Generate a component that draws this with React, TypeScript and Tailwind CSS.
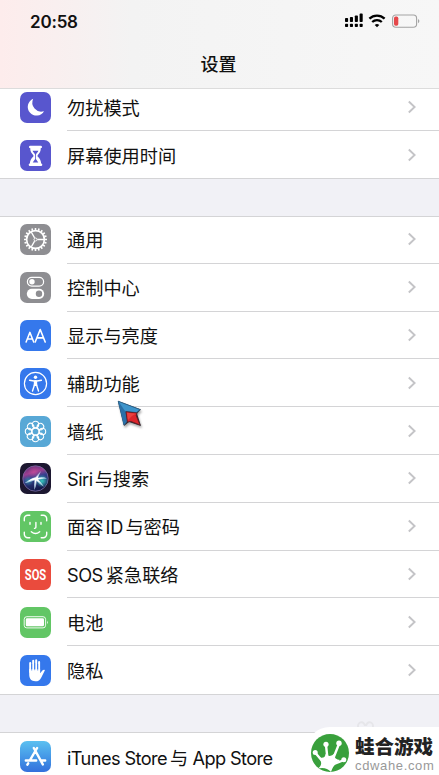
import type { ReactNode } from 'react'

interface SettingsRow {
  label: ReactNode
  icon: ReactNode
}

const TEETH = Array.from({ length: 20 }, (_, i) => i * 18)
const PETALS = Array.from({ length: 8 }, (_, i) => i * 45)

interface TileProps {
  className: string
  children: ReactNode
}

const Tile = ({ className, children }: TileProps) => (
  <div className={`w-[31px] h-[31px] rounded-[7px] overflow-hidden shrink-0 ${className}`}>
    <svg viewBox="0 0 31 31" className="block w-full h-full" fill="none">
      {children}
    </svg>
  </div>
)

const MoonIcon = () => (
  <Tile className="bg-[#5856ce]">
    <path d="M13.2 6.8 A8.7 8.7 0 1 0 24 19.2 A9 9 0 0 1 13.2 6.8 Z" fill="white" />
  </Tile>
)

const HourglassIcon = () => (
  <Tile className="bg-[#5856ce]">
    <path
      d="M10.2 5.7 H20.8 A1.2 1.2 0 0 1 20.8 8.1 C20.8 11.4 19.8 13 17.6 15.2 V16.4 C20 18.5 21 20.6 21.1 23.5 A1.2 1.2 0 0 1 21 26 H10 A1.2 1.2 0 0 1 9.9 23.5 C10 20.6 11 18.5 13.4 16.4 V15.2 C11.2 13 10.2 11.4 10.2 8.1 A1.2 1.2 0 0 1 10.2 5.7 Z"
      fill="white"
    />
    <path d="M12.6 10.7 H18.4 C17.8 12.4 16.3 13.2 15.9 14.7 V19 L18.3 22.5 H12.7 L15.1 19 V14.7 C14.7 13.2 13.2 12.4 12.6 10.7 Z" fill="#5856ce" />
  </Tile>
)

const GearIcon = () => (
  <Tile className="bg-[#8e8e92]">
    <g stroke="white">
      <circle cx="15.5" cy="15.5" r="8.9" strokeWidth="1.7" />
      {TEETH.map((a) => (
        <path key={a} d="M15.5 6.2 V4" strokeWidth="1.6" transform={`rotate(${a} 15.5 15.5)`} />
      ))}
      <circle cx="15.5" cy="15.5" r="1.5" strokeWidth="1" />
      <path d="M17.3 15.5 H24 M14.6 13.9 L11.3 8.1 M14.6 17.1 L11.3 22.9" strokeWidth="1.3" />
    </g>
  </Tile>
)

const ControlIcon = () => (
  <Tile className="bg-[#8e8e92]">
    <rect x="7.4" y="5.3" width="16.2" height="8.8" rx="4.4" stroke="white" strokeWidth="1.2" />
    <circle cx="12" cy="9.7" r="2.7" fill="white" />
    <rect x="6.8" y="16.7" width="17.4" height="10.2" rx="5.1" fill="white" />
    <circle cx="19" cy="21.8" r="3.2" fill="#8e8e92" />
  </Tile>
)

const DisplayIcon = () => (
  <Tile className="bg-[#3578ec]">
    <g stroke="white" strokeLinecap="round" strokeLinejoin="round">
      <path d="M6.1 22 L9.9 12.4 L13.7 22 M7.4 18.9 H12.4" strokeWidth="1.5" />
      <path d="M15.2 22 L20.2 9.5 L25.2 22 M17 17.9 H23.4" strokeWidth="1.6" />
    </g>
  </Tile>
)

const AccessibilityIcon = () => (
  <Tile className="bg-[#3578ec]">
    <circle cx="15.5" cy="15.5" r="11.1" stroke="white" strokeWidth="1.2" />
    <circle cx="15.5" cy="9.3" r="1.7" fill="white" />
    <path
      d="M9.6 12.3 L14 13 H17 L21.4 12.3 M15.5 12.8 V17 M14.6 16.5 L12.5 23 M16.4 16.5 L18.5 23"
      stroke="white"
      strokeWidth="1.4"
      strokeLinecap="round"
    />
    <path d="M13.9 12.6 H17.1 L17.3 18 H13.7 Z" fill="white" />
  </Tile>
)

const WallpaperIcon = () => (
  <Tile className="bg-[#58a8d6]">
    <g stroke="white" strokeWidth="1.1">
      <circle cx="15.5" cy="15.5" r="3.4" />
      {PETALS.map((a) => (
        <circle key={a} cx="15.5" cy="8.5" r="3.2" transform={`rotate(${a} 15.5 15.5)`} />
      ))}
    </g>
  </Tile>
)

const SiriIcon = () => (
  <Tile className="bg-[#1c1730]">
    <defs>
      <linearGradient id="siri-bg" x1="0" y1="0" x2="0.3" y2="1">
        <stop offset="0" stopColor="#4d2a6e" />
        <stop offset="0.35" stopColor="#9c3f92" />
        <stop offset="0.55" stopColor="#34408e" />
        <stop offset="1" stopColor="#141b4c" />
      </linearGradient>
      <radialGradient id="siri-pink" cx="0.5" cy="0.5" r="0.5">
        <stop offset="0" stopColor="#e0559c" />
        <stop offset="1" stopColor="#e0559c" stopOpacity="0" />
      </radialGradient>
      <radialGradient id="siri-teal" cx="0.5" cy="0.5" r="0.5">
        <stop offset="0" stopColor="#35c8c0" />
        <stop offset="1" stopColor="#35c8c0" stopOpacity="0" />
      </radialGradient>
    </defs>
    <circle cx="15.5" cy="15.5" r="12.7" fill="url(#siri-bg)" stroke="#7c6ca4" strokeWidth="0.8" />
    <circle cx="14" cy="9" r="6.5" fill="url(#siri-pink)" opacity="0.5" />
    <circle cx="22" cy="18" r="6.5" fill="url(#siri-teal)" />
    <circle cx="8.5" cy="18" r="5" fill="url(#siri-teal)" opacity="0.5" />
    <path d="M4.5 20.2 Q12 14.2 15 14.4 L21 8 Q18.5 13.5 18 14.5 Q22.5 13.2 27 15.5 Q21 16 18.6 16.7 Q22 20 24 23.8 Q19 20.5 16.8 18.2 Q16.5 22.5 14.4 27 Q13.6 22 14.4 17.6 Q10 19.2 4.5 20.2 Z" fill="#d4f4ff" opacity="0.7" />
    <path d="M8 18.2 Q13 14.7 16 14.6 L18.6 12.2 L17.8 15 L23.5 15.3 L17.8 16.3 L20.8 20 L16.2 17.4 L15 22.5 L14.8 16.8 Z" fill="white" />
  </Tile>
)

const FaceIcon = () => (
  <Tile className="bg-[#62c665]">
    <g stroke="white" strokeWidth="1.4" strokeLinecap="round">
      <path d="M4.3 9.8 V7.8 A3.5 3.5 0 0 1 7.8 4.3 H9.8 M21.2 4.3 H23.2 A3.5 3.5 0 0 1 26.7 7.8 V9.8 M26.7 21.2 V23.2 A3.5 3.5 0 0 1 23.2 26.7 H21.2 M9.8 26.7 H7.8 A3.5 3.5 0 0 1 4.3 23.2 V21.2" />
      <path d="M10 11.5 V13.3 M21 11.5 V13.3 M15.9 11.5 V16.3 Q15.9 17.4 14.5 17.4 M11.3 20.7 Q15.5 24.2 19.7 20.7" />
    </g>
  </Tile>
)

const SosIcon = () => (
  <Tile className="bg-[#ea4b3d]">
    <text
      x="15.5"
      y="20.5"
      textAnchor="middle"
      textLength="21.5"
      lengthAdjust="spacingAndGlyphs"
      fill="white"
      className="font-['Roboto','Liberation_Sans',sans-serif] text-[14px] font-bold"
    >
      SOS
    </text>
  </Tile>
)

const BatteryIcon = () => (
  <Tile className="bg-[#62c665]">
    <rect x="4.2" y="9.7" width="21.4" height="11.2" rx="2.6" stroke="white" strokeWidth="0.9" />
    <rect x="5.8" y="11.3" width="18.2" height="8" rx="1.4" fill="white" />
    <path d="M27 13.4 Q28.6 15.3 27 17.2 Z" fill="white" />
  </Tile>
)

const HandIcon = () => (
  <Tile className="bg-[#3578ec]">
    <g stroke="white" strokeWidth="2" strokeLinecap="round">
      <path d="M10.2 8 V17 M13.2 5.7 V16 M16.2 5.2 V16 M19.1 7 V17" />
    </g>
    <path d="M9.2 14 H20.1 V18.2 L22.4 15.4 C23.2 14.4 25.2 14.4 24.8 15.6 L21.3 22.4 C20 25 18.2 26.3 15.3 26.3 C11.3 26.3 9.2 23.8 9.2 19.6 Z" fill="white" />
    <path d="M11.7 9 V15.5 M14.7 8 V15.2 M17.7 9 V15.5" stroke="#3578ec" strokeWidth="0.7" />
  </Tile>
)

const AppStoreIcon = () => (
  <Tile className="bg-linear-to-b from-[#5cc0f0] to-[#3470dc]">
    <g stroke="white" strokeWidth="2.4" strokeLinecap="round">
      <path d="M17.1 7 L10 19.2 M13.8 7 L22.8 23.4 M5.8 19.5 H16.2 M20.6 19.5 H25.2 M8.2 22.3 L7.4 23.7" />
    </g>
  </Tile>
)

const TOP_ROWS: SettingsRow[] = [
  { label: '勿扰模式', icon: <MoonIcon /> },
  { label: '屏幕使用时间', icon: <HourglassIcon /> },
]

const MAIN_ROWS: SettingsRow[] = [
  { label: '通用', icon: <GearIcon /> },
  { label: '控制中心', icon: <ControlIcon /> },
  { label: '显示与亮度', icon: <DisplayIcon /> },
  { label: '辅助功能', icon: <AccessibilityIcon /> },
  { label: '墙纸', icon: <WallpaperIcon /> },
  { label: <><span className="tracking-[-0.5px]">Siri</span><span className="ml-[2px]">与搜索</span></>, icon: <SiriIcon /> },
  { label: <>面容<span className="mx-[2px]">ID</span>与密码</>, icon: <FaceIcon /> },
  { label: <><span className="tracking-[-0.5px]">SOS</span><span className="ml-[3px]">紧急联络</span></>, icon: <SosIcon /> },
  { label: '电池', icon: <BatteryIcon /> },
  { label: '隐私', icon: <HandIcon /> },
]

const Chevron = () => (
  <svg viewBox="0 0 10 14" className="w-[10px] h-[14px]" fill="none">
    <path d="M1.8 1.5 L7.6 7 L1.8 12.5" stroke="#c4c4c7" strokeWidth="1.9" />
  </svg>
)

interface RowProps {
  row: SettingsRow
  last?: boolean
}

const Row = ({ row, last }: RowProps) => (
  <div className="flex h-[47.8px] shrink-0 pl-5 bg-white">
    <div className="flex items-center w-[47px]">{row.icon}</div>
    <div className={`flex flex-1 items-center justify-between pr-[22px] ${last ? '' : 'border-b border-[#d4d4d6]'}`}>
      <span className="pt-0.5 text-[18.2px] leading-6 whitespace-nowrap">{row.label}</span>
      <Chevron />
    </div>
  </div>
)

const StatusIcons = () => (
  <svg viewBox="0 0 78 18" className="w-[78px] h-[18px]" fill="none">
    <g fill="black">
      <rect x="1" y="6" width="3.1" height="4" rx="0.8" />
      <rect x="5.9" y="5" width="3.1" height="5" rx="0.8" />
      <rect x="10.8" y="3.4" width="3.1" height="6.6" rx="0.8" />
      <rect x="15.6" y="1.6" width="3.1" height="8.4" rx="0.8" />
      <rect x="1" y="11.8" width="3.1" height="3.2" rx="0.8" />
      <rect x="5.9" y="11.8" width="3.1" height="3.2" rx="0.8" />
      <rect x="10.8" y="11.8" width="3.1" height="3.2" rx="0.8" />
      <rect x="15.6" y="11.8" width="3.1" height="3.2" rx="0.8" />
      <path d="M33 15.3 L30.7 13 A3.4 3.4 0 0 1 35.3 13 Z" />
    </g>
    <path d="M25.4 6.7 A11 11 0 0 1 40.6 6.7 M28.2 10 A7 7 0 0 1 37.8 10" stroke="black" strokeWidth="2.3" />
    <rect x="48.6" y="3" width="24" height="12.2" rx="3.2" stroke="#a3a3a3" strokeWidth="1.1" />
    <rect x="50" y="4.5" width="4.3" height="9.2" rx="1.7" fill="#e5484b" />
    <path d="M74 7 Q76.8 9.1 74 11.2 Z" fill="#a3a3a3" />
  </svg>
)

const Cursor = () => (
  <svg viewBox="0 0 32 34" className="absolute left-[115px] top-[398px] w-8 h-[34px] drop-shadow-[1px_2px_1px_#00000055]">
    <path d="M3 3 L26 11.6 L22 15.5 L26 28 L14 24 L9 28 Z" fill="#2d2a33" />
    <path d="M3.2 3.2 L25.2 11.6 L21.5 14.6 L10.4 13.4 L11.8 23.4 L9 27 Z" fill="#3d94cb" stroke="#2b5f86" strokeWidth="0.9" strokeLinejoin="round" />
    <path d="M3.6 3.8 L10.4 13.4 L11.8 23.4 L9 26.4 Z" fill="#2a70a8" />
    <path d="M11 13.8 L22 15 L21.2 17.6 L25 27 L16 23.4 L12.4 24 Z" fill="#dc252b" stroke="#5e1a22" strokeWidth="0.8" strokeLinejoin="round" />
    <path d="M12 14.8 L20.8 15.7 L17 18 L13 22 Z" fill="#ea413f" />
  </svg>
)

const Watermark = () => (
  <div className="absolute left-[306px] top-[727px] w-[133px] h-12 flex bg-white rounded-tl-[24px] pl-[5px]">
    {/* faint paw behind the badge */}
    <svg viewBox="0 0 20 8" className="absolute left-[50px] top-[-7px] w-5 h-2" fill="none">
      <path d="M2 8 A3.2 3.8 0 0 1 9 7 M10 7 A3.2 3.8 0 0 1 17 8" transform="translate(0 -1)" stroke="#e6e6ea" strokeWidth="2" />
    </svg>
    <svg viewBox="0 0 38 38" className="w-[38px] h-[38px] mt-[7px] shrink-0">
      <defs>
        <clipPath id="badge">
          <circle cx="19" cy="19" r="19" />
        </clipPath>
      </defs>
      <circle cx="19" cy="19" r="19" fill="#39a03c" />
      <g clipPath="url(#badge)" stroke="white" fill="white" strokeLinecap="round">
        <path d="M4.5 19 L12 28 M15 11 L16.5 25 M28 10 L22 25 M33 26 L23 30" strokeWidth="2.4" />
        <circle cx="4.2" cy="18.6" r="2.5" stroke="none" />
        <circle cx="15" cy="10.3" r="2.6" stroke="none" />
        <circle cx="28" cy="9.2" r="2.7" stroke="none" />
        <circle cx="32.8" cy="25.8" r="2.5" stroke="none" />
        <path d="M8.5 23.5 Q14 25 14.5 20 Q19 24 23.5 19.5 Q22.5 25 29 26 Q22 31 20 38 Q15 32.5 7 34.5 Q12.5 31 8.5 23.5 Z" stroke="none" />
      </g>
    </svg>
    <div className="flex flex-col pt-[9px] pl-[6px] whitespace-nowrap">
      <span className="text-[19.5px] leading-[23px] font-black text-[#222]">蛙合游戏</span>
      <span className="font-['Liberation_Sans',sans-serif] text-[13px] leading-[13px] tracking-[0.65px] text-[#999]">cdwahe.com</span>
    </div>
  </div>
)

export default function App() {
  return (
    <div className="relative w-[439px] h-[775px] overflow-hidden bg-[#f1f1f6] text-[#111] font-['Inter','Noto_Sans_CJK_SC',sans-serif]">
      <header className="flex flex-col h-[89px] border-b border-[#dcdcdc] bg-linear-to-r from-[#fdecec] via-[#f3f3f3] via-30% to-[#f7f7f7]">
        <div className="flex items-start justify-between h-[43px] pl-[30px] pr-[17px] pt-3">
          <span className="text-[17px] leading-[20px] font-semibold tracking-[-0.2px]">20:58</span>
          <StatusIcons />
        </div>
        <h1 className="pt-px pr-[2px] text-center text-[18px] leading-[46px] font-medium">设置</h1>
      </header>

      {/* first row is partly scrolled under the header */}
      <section className="h-[90px] flex flex-col justify-end overflow-hidden border-b border-[#d4d4d6] bg-white">
        <div className="-mb-px">
          {TOP_ROWS.map((row, i) => (
            <Row key={i} row={row} last={i === TOP_ROWS.length - 1} />
          ))}
        </div>
      </section>

      <section className="mt-[37px] h-[479px] flex flex-col justify-end overflow-hidden border-y border-[#d4d4d6]">
        {MAIN_ROWS.map((row, i) => (
          <Row key={i} row={row} last={i === MAIN_ROWS.length - 1} />
        ))}
      </section>

      <section className="mt-[37px] border-t border-[#d4d4d6]">
        <Row
          row={{
            label: (
              <span className="tracking-[-0.6px]">
                iTunes Store<span className="mx-[3px]">与</span><span className="ml-[2px]">App Store</span>
              </span>
            ),
            icon: <AppStoreIcon />,
          }}
          last
        />
      </section>

      <Cursor />
      <Watermark />
    </div>
  )
}
